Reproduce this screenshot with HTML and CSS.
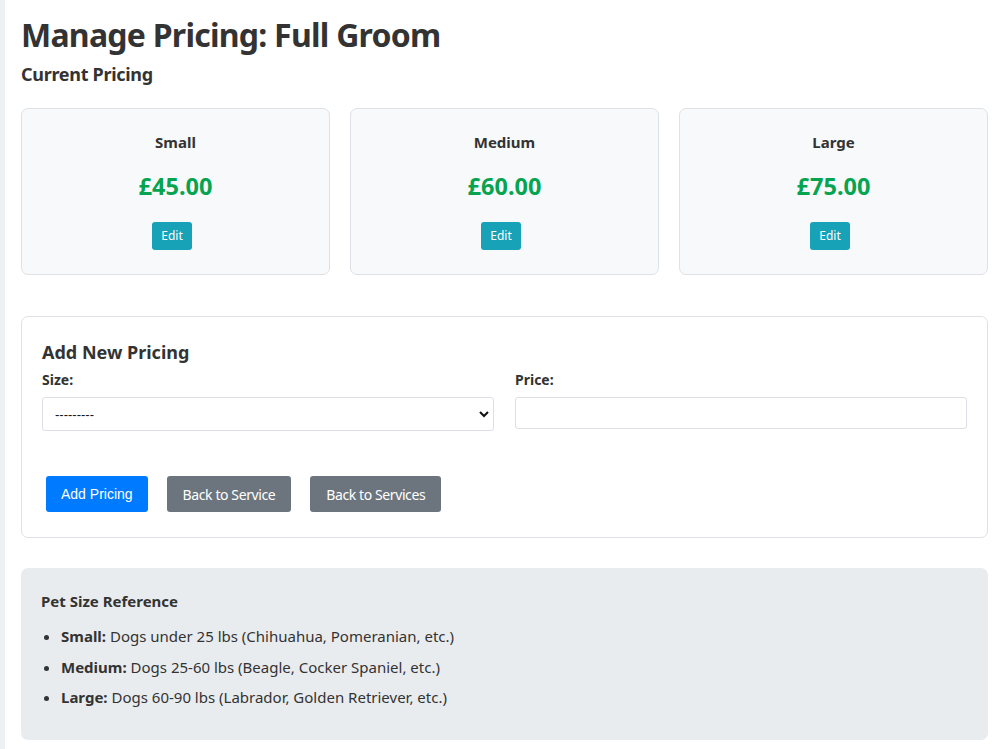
FILE: index.html
```html
<!DOCTYPE html>
<html lang="en">
<head>
<meta charset="utf-8">
<title>Manage Pricing: Full Groom</title>
<link rel="stylesheet" href="styles.css">
</head>
<body>
<div class="layout">
  <div class="side-strip"></div>
  <main class="main">
    <h1 class="page-title">Manage Pricing: Full Groom</h1>
    <h2 class="section-title">Current Pricing</h2>

    <div class="price-grid">
      <div class="price-card">
        <div class="price-size">Small</div>
        <div class="price-value">£45.00</div>
        <a class="btn btn-info">Edit</a>
      </div>
      <div class="price-card">
        <div class="price-size">Medium</div>
        <div class="price-value">£60.00</div>
        <a class="btn btn-info">Edit</a>
      </div>
      <div class="price-card">
        <div class="price-size">Large</div>
        <div class="price-value">£75.00</div>
        <a class="btn btn-info">Edit</a>
      </div>
    </div>

    <form class="form-card">
      <h3 class="form-title">Add New Pricing</h3>
      <div class="form-row">
        <div class="form-group">
          <label class="form-label">Size:</label>
          <div class="select-wrap">
            <select class="form-select">
              <option>---------</option>
            </select>
            <svg class="select-chevron" width="10" height="8" viewBox="0 0 10 8"><path d="M1 2 L5 6 L9 2" fill="none" stroke="#111" stroke-width="2"/></svg>
          </div>
        </div>
        <div class="form-group">
          <label class="form-label">Price:</label>
          <input class="form-input" type="text">
        </div>
      </div>
      <div class="form-actions">
        <button type="button" class="btn-primary">Add Pricing</button>
        <a class="btn btn-secondary">Back to Service</a>
        <a class="btn btn-secondary">Back to Services</a>
      </div>
    </form>

    <div class="ref-box">
      <h4 class="ref-title">Pet Size Reference</h4>
      <ul class="ref-list">
        <li><strong>Small:</strong> Dogs under 25 lbs (Chihuahua, Pomeranian, etc.)</li>
        <li><strong>Medium:</strong> Dogs 25-60 lbs (Beagle, Cocker Spaniel, etc.)</li>
        <li><strong>Large:</strong> Dogs 60-90 lbs (Labrador, Golden Retriever, etc.)</li>
      </ul>
    </div>
  </main>
</div>
</body>
</html>
```
FILE: styles.css
```css
* { box-sizing: border-box; }
html, body { margin: 0; padding: 0; background: #fff; }
body {
  font-family: "Noto Sans", "Open Sans", sans-serif;
  color: #333;
  font-size: 15px;
}
.layout { display: flex; min-height: 749px; }
.side-strip { width: 5px; background: #eef0f3; flex: none; }
.main { flex: 1; padding: 16px 14px 0 16px; }

.page-title {
  font-size: 32px;
  line-height: 38px;
  font-weight: 700;
  letter-spacing: -0.75px;
  margin: 0 0 9px;
}
.section-title {
  font-size: 18px;
  line-height: 22px;
  font-weight: 700;
  letter-spacing: -0.3px;
  margin: 0 0 23px;
}

.price-grid {
  display: grid;
  grid-template-columns: repeat(3, 1fr);
  gap: 20px;
}
.price-card {
  background: #f8f9fa;
  border: 1px solid #dee2e6;
  border-radius: 7px;
  padding: 20px 20px 24px;
  display: flex;
  flex-direction: column;
  align-items: center;
}
.price-size { font-size: 15px; font-weight: 700; line-height: 26px; }
.price-value {
  margin-top: 15px;
  font-size: 23.5px;
  line-height: 32px;
  font-weight: 700;
  color: #06a450;
}
.btn {
  display: inline-block;
  text-decoration: none;
  color: #fff;
  border-radius: 3px;
}
.btn-info {
  margin-top: 20px;
  margin-right: 7px;
  background: #17a2b8;
  font-size: 12px;
  line-height: 28px;
  height: 28px;
  padding: 0 9px;
}

.form-card {
  margin: 41px 0 0;
  border: 1px solid #dee2e6;
  border-radius: 7px;
  padding: 23px 20px 25px;
  background: #fff;
}
.form-title {
  font-size: 18px;
  line-height: 24px;
  font-weight: 700;
  margin: 0 0 6px;
}
.form-row { display: flex; gap: 21px; }
.form-group { flex: 1; }
.form-label {
  display: block;
  font-size: 14px;
  line-height: 20px;
  font-weight: 700;
  margin-bottom: 7px;
}
.select-wrap { position: relative; }
.form-select {
  -webkit-appearance: none;
  appearance: none;
  width: 100%;
  height: 34px;
  border: 1px solid #dcdfe3;
  border-radius: 3px;
  background: #fff;
  padding: 0 12px;
  font-family: "Liberation Sans", Arial, sans-serif;
  font-size: 13px;
  color: #111;
}
.select-chevron { position: absolute; right: 5px; top: 13px; }
.form-input {
  display: block;
  width: 100%;
  height: 32px;
  border: 1px solid #dcdfe3;
  border-radius: 3px;
  background: #fff;
}

.form-actions {
  display: flex;
  gap: 19px;
  margin-top: 45px;
  padding-left: 4px;
}
.btn-primary {
  background: #007bff;
  border: none;
  color: #fff;
  font-family: "Liberation Sans", Arial, sans-serif;
  font-size: 14px;
  height: 36px;
  padding: 0 15px;
  border-radius: 3px;
}
.btn-secondary {
  background: #6c757d;
  font-size: 14px;
  letter-spacing: -0.4px;
  line-height: 37px;
  height: 36px;
  padding: 0 16px;
}

.ref-box {
  margin-top: 30px;
  background: #e9ecef;
  border-radius: 7px;
  padding: 22px 20px 23px;
}
.ref-title {
  font-size: 15px;
  line-height: 22px;
  font-weight: 700;
  margin: 0 0 13px;
}
.ref-list {
  margin: 0;
  padding-left: 20px;
}
.ref-list li {
  font-size: 15px;
  line-height: 22px;
  margin-bottom: 8.5px;
}
```
